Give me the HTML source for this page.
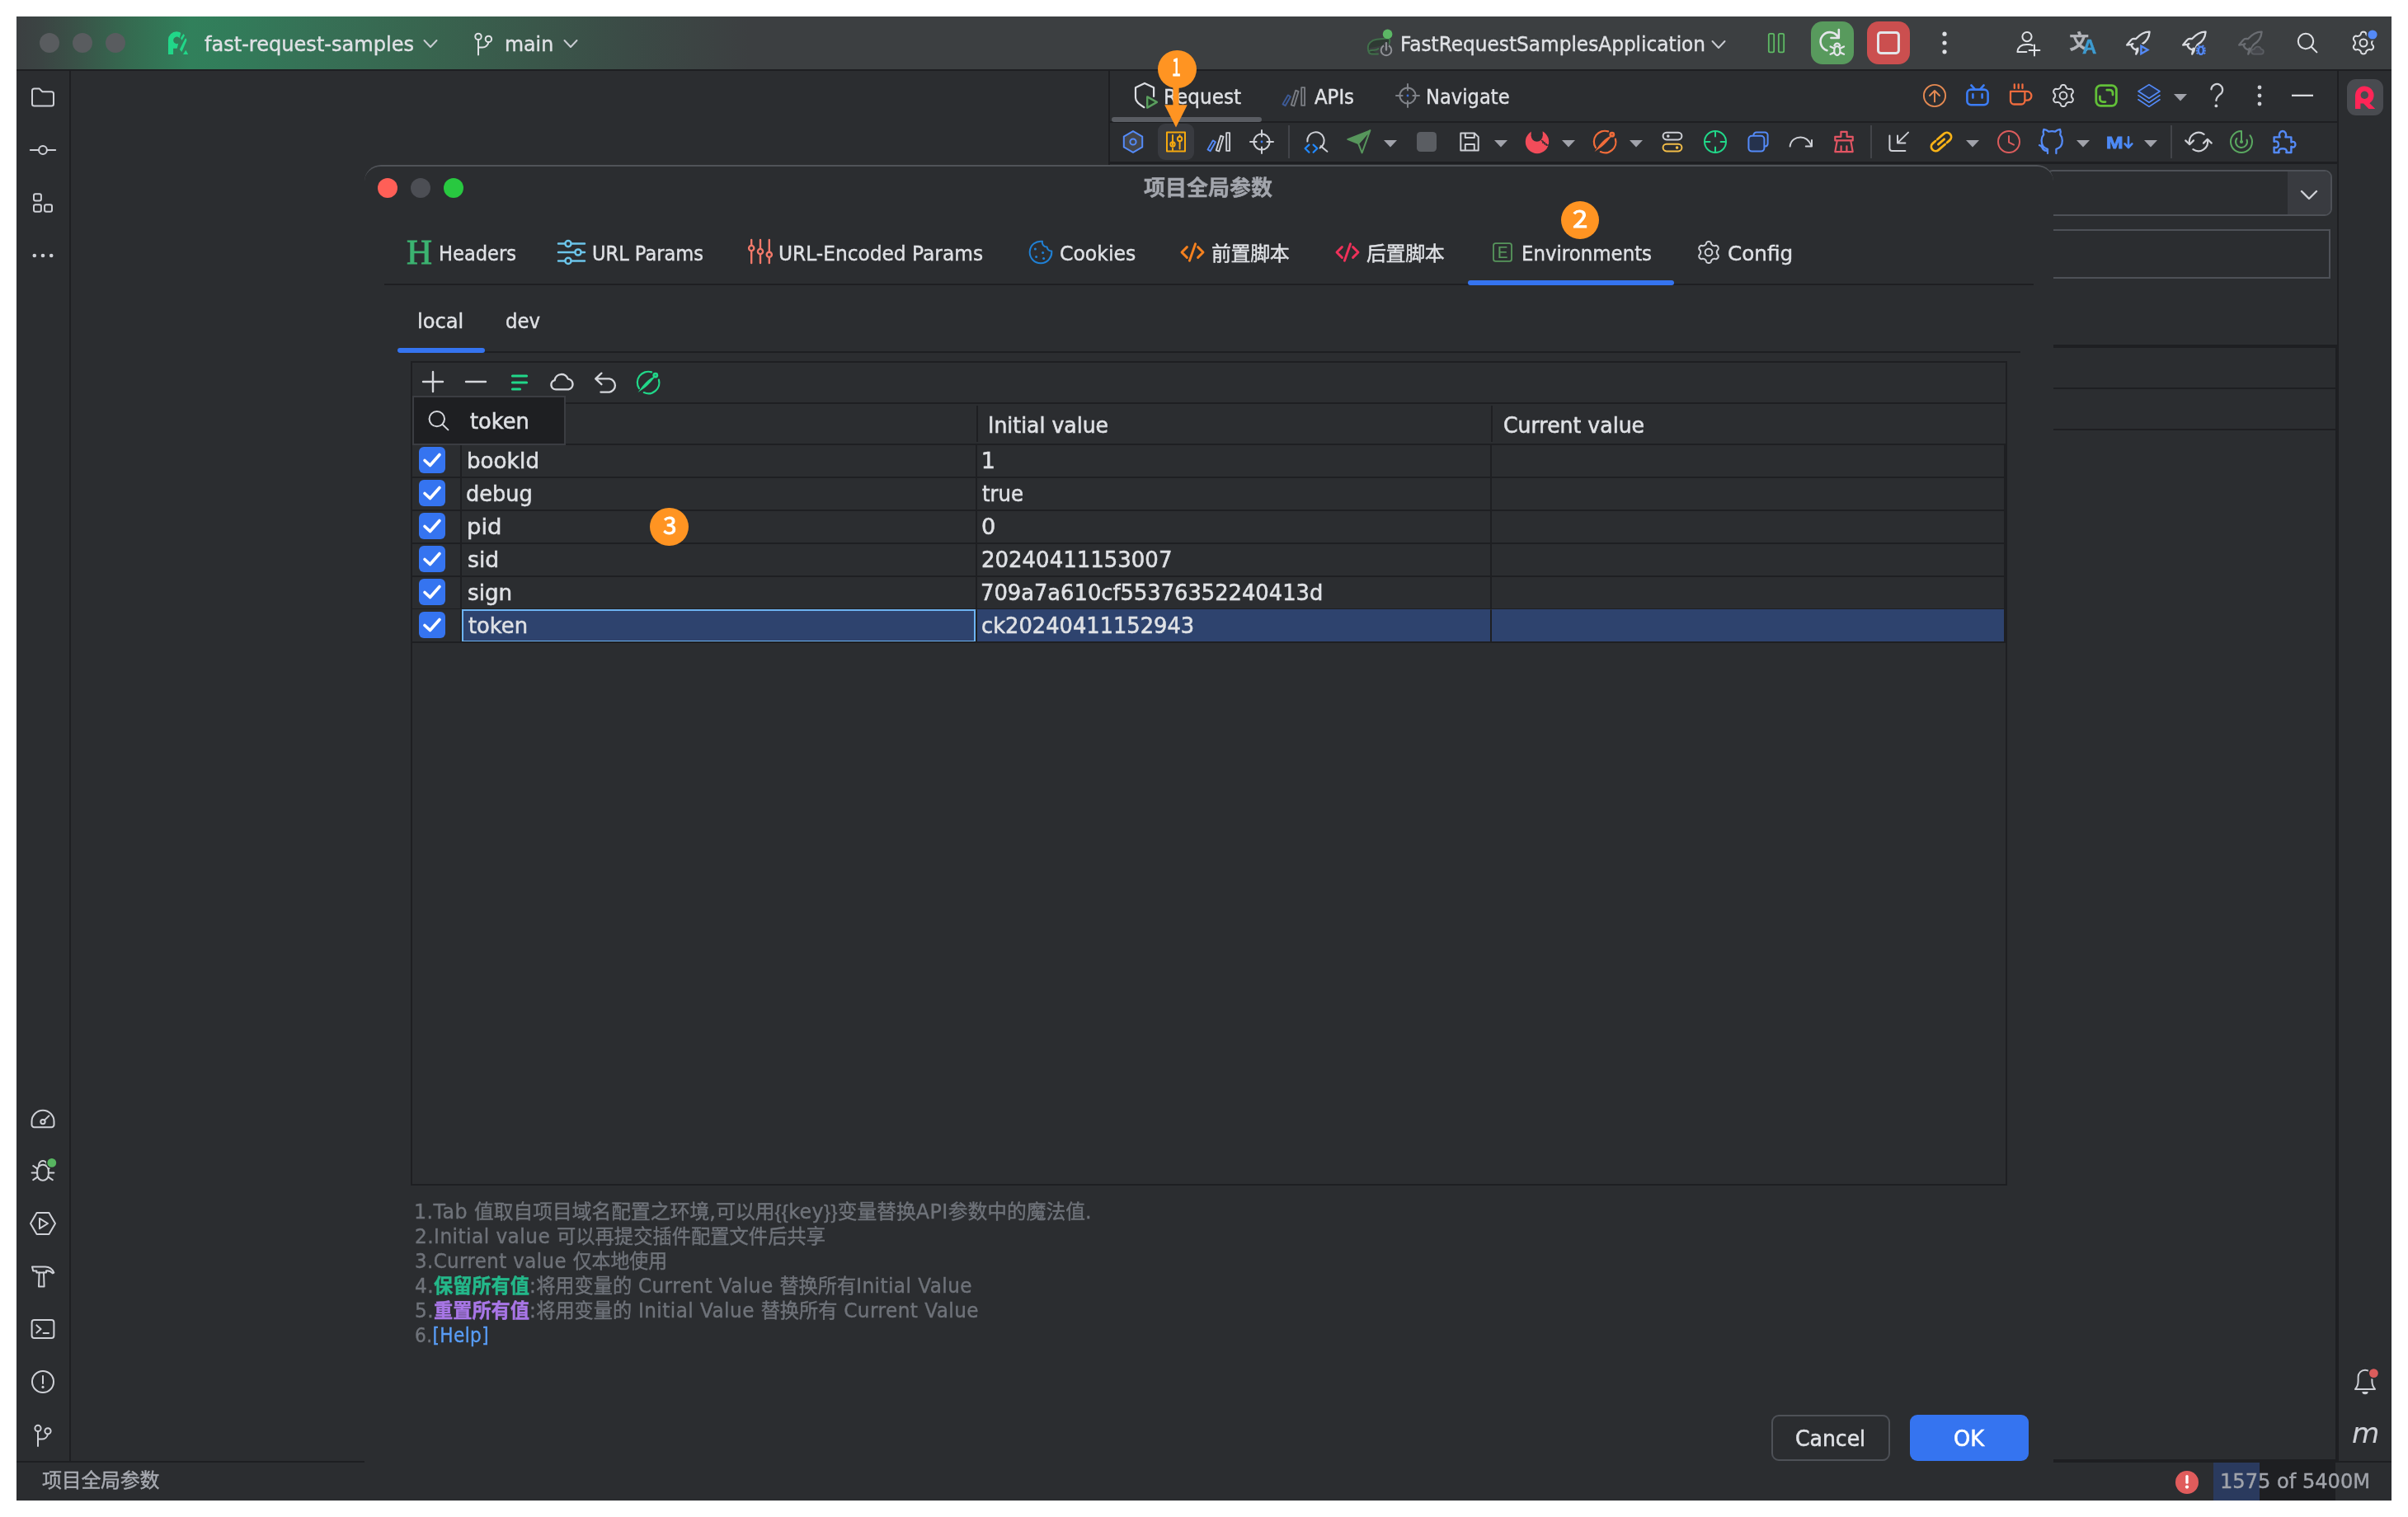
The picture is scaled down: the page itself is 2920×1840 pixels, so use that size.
<!DOCTYPE html><html><head><meta charset='utf-8'><title>IDE</title><style>html,body{margin:0;padding:0;background:#fff}body{width:2920px;height:1840px;position:relative;overflow:hidden}svg{overflow:visible}#w{position:absolute;left:0;top:0;width:2920px;height:1840px;will-change:transform}#w div{-webkit-text-stroke:0.4px}</style></head><body><div id='w'><div style="position:absolute;left:20px;top:20px;width:2880px;height:1800px;background:#2b2d30;"></div><div style="position:absolute;left:20px;top:20px;width:2880px;height:64px;background:linear-gradient(90deg,#3b3f41 0px,#3b4443 30px,#3a5047 67px,#356a50 135px,#31805b 211px,#327c5a 262px,#367156 359px,#38654f 493px,#3a574a 628px,#3b4b46 740px,#3c4443 820px,#3c3f41 890px);"></div><div style="position:absolute;left:20px;top:84px;width:2880px;height:2px;background:#1e1f22;"></div><div style="position:absolute;left:48px;top:40px;width:24px;height:24px;background:#595c5f;border-radius:50%"></div><div style="position:absolute;left:88px;top:40px;width:24px;height:24px;background:#595c5f;border-radius:50%"></div><div style="position:absolute;left:128px;top:40px;width:24px;height:24px;background:#595c5f;border-radius:50%"></div><svg style="position:absolute;left:196px;top:32px;" width="40" height="40" viewBox="-20 -20 40 40" fill="none"><defs><clipPath id="lgc"><path d="M-14 -16 H4.25 L-2.06 10 V16 H-14 Z"/></clipPath></defs><g clip-path="url(#lgc)"><path fill="#21d789" fill-rule="evenodd" d="M-12 13.9 V-3.5 A10.2 10.2 0 0 1 8.4 -3.5 A10.2 10.2 0 0 1 -1.8 6.7 H-5.9 V13.9 Z M-1.5 -7.4 a4.3 4.3 0 1 0 0.01 0 Z"/></g><path fill="#21d789" d="M6.4 -11 L8 -8.9 L4.5 -3.1 L3 -5.8 Z"/><path fill="#21d789" d="M9.9 -5.4 L10.4 -3 L4.4 10.9 L1.9 8 L8.4 -4.9 Z"/><path fill="#21d789" d="M9.3 8.8 L12.2 13.9 H6 Z"/></svg><svg style="position:absolute;left:502px;top:33px;" width="40" height="40" viewBox="-20 -20 40 40" fill="none"><g stroke="#c9ccd2" stroke-width="2" stroke-linecap="round" stroke-linejoin="round" fill="none" ><path d="M-7.5 -4.0 L0 4.0 L7.5 -4.0"/></g></svg><svg style="position:absolute;left:565.5px;top:32.5px;" width="40" height="40" viewBox="-20 -20 40 40" fill="none"><g stroke="#dfe1e5" stroke-width="2" stroke-linecap="round" stroke-linejoin="round" fill="none" ><circle cx="-6" cy="-8.6" r="3.7"/><circle cx="6.4" cy="-5.6" r="3.7"/><path d="M-6 -4.9 V13.5 M-6 4.5 H-1 A7.4 7.4 0 0 0 6.4 -1.9"/></g></svg><svg style="position:absolute;left:672px;top:33px;" width="40" height="40" viewBox="-20 -20 40 40" fill="none"><g stroke="#c9ccd2" stroke-width="2" stroke-linecap="round" stroke-linejoin="round" fill="none" ><path d="M-7.5 -4.0 L0 4.0 L7.5 -4.0"/></g></svg><svg style="position:absolute;left:1653px;top:32px;" width="40" height="40" viewBox="-20 -20 40 40" fill="none"><path d="M-14.2 6.5 C-14.6 1 -10 -3.4 -3.5 -4.2 L9 -5.6 C11.6 -5.9 12.6 -4 12.2 -1.6 L11 2 M-2 13.6 H-9.5 C-12.8 13.6 -14 10.5 -14.2 6.5 M-12 9.5 C-8 8 -4 9.6 -1.6 7" stroke="#41704b" stroke-width="2" fill="#2e3a33" stroke-linecap="round"/><circle cx="8" cy="8.9" r="6.3" stroke="#8f9196" stroke-width="2" fill="#3b3e41"/><path d="M8 0.2 V8.4" stroke="#8f9196" stroke-width="2.2" stroke-linecap="round"/><path d="M8 -0.5 V4" stroke="#3b3e41" stroke-width="6" /><path d="M8 0.2 V8.4" stroke="#8f9196" stroke-width="2.2" stroke-linecap="round"/><circle cx="9.6" cy="-10.6" r="5.8" fill="#5cb865"/></svg><svg style="position:absolute;left:2064px;top:34px;" width="40" height="40" viewBox="-20 -20 40 40" fill="none"><g stroke="#c9ccd2" stroke-width="2" stroke-linecap="round" stroke-linejoin="round" fill="none" ><path d="M-7.5 -4.0 L0 4.0 L7.5 -4.0"/></g></svg><svg style="position:absolute;left:2134px;top:32px;" width="40" height="40" viewBox="-20 -20 40 40" fill="none"><rect x="-9.2" y="-11.2" width="6.4" height="22.6" rx="1.6" stroke="#5fb865" stroke-width="1.8" fill="#344a3b"/><rect x="2.8" y="-11.2" width="6.4" height="22.6" rx="1.6" stroke="#5fb865" stroke-width="1.8" fill="#344a3b"/></svg><div style="position:absolute;left:2196px;top:26px;width:52px;height:52px;background:#589a5d;border-radius:14px"></div><svg style="position:absolute;left:2202px;top:32px;" width="40" height="40" viewBox="-20 -20 40 40" fill="none"><g stroke="#e4e6ea" stroke-width="2.6" stroke-linecap="round" stroke-linejoin="round" fill="none" stroke-linecap='butt' stroke-linejoin='miter'><path d="M-6.5 9.2 A11.3 11.3 0 1 1 6.2 -8 M7.8 -16 V-6 H-1.6"/></g><g stroke="#e4e6ea" stroke-width="2.3" stroke-linecap="round" fill="none"><path d="M2.3 6.8 L-2.4 4.4 M2.3 11.6 L-2.4 13.8 M9.3 6.8 L14 4.4 M9.3 11.6 L14 13.8"/><path d="M2.5 3.6 A3.4 4 0 0 1 9.1 3.6"/><ellipse cx="5.8" cy="9.6" rx="3.6" ry="5.4" fill="#589a5d"/></g></svg><div style="position:absolute;left:2264px;top:26px;width:52px;height:52px;background:#cb4f4f;border-radius:14px"></div><svg style="position:absolute;left:2270px;top:32px;" width="40" height="40" viewBox="-20 -20 40 40" fill="none"><rect x="-12.5" y="-12.6" width="24.9" height="25.1" rx="3.2" stroke="#e4e6ea" stroke-width="3"/></svg><svg style="position:absolute;left:2338px;top:32px;" width="40" height="40" viewBox="-20 -20 40 40" fill="none"><circle cy="-10.8" r="2.6" fill="#dfe1e5"/><circle r="2.6" fill="#dfe1e5"/><circle cy="10.8" r="2.6" fill="#dfe1e5"/></svg><svg style="position:absolute;left:2439px;top:32px;" width="40" height="40" viewBox="-20 -20 40 40" fill="none"><g stroke="#dfe1e5" stroke-width="2" stroke-linecap="round" stroke-linejoin="round" fill="none" ><circle cx="-1" cy="-7.4" r="5.6"/><path d="M-1.6 11 H-12.6 C-12 5 -8 2 -1.4 2 H1 C3 2 4.4 2.4 5.6 3"/><path d="M8 2.4 V15.4 M1.6 9 H14.4"/></g></svg><div style="position:absolute;left:2509.4px;top:32.9px;height:33px;line-height:33px;white-space:pre;font-family:'Noto Sans CJK SC',sans-serif;font-size:23.5px;font-weight:bold;font-style:normal;color:#b3b5ba;">文</div><div style="position:absolute;left:2525px;top:40.4px;height:34px;line-height:34px;white-space:pre;font-family:'Liberation Sans',sans-serif;font-size:24px;font-weight:bold;font-style:normal;color:#3d9bd0;">A</div><svg style="position:absolute;left:2573px;top:32px;" width="40" height="40" viewBox="-20 -20 40 40" fill="none"><g stroke="#d9dbe0" stroke-width="2.3" stroke-linecap="round" stroke-linejoin="round" fill="none" ><path d="M13.6 -13.3 C8 -13.6 2 -10.2 -3.1 -4.8 L-5.4 -5.1 C-7 -5 -8 -4.4 -8.8 -3.4 L-13.8 2.5 L-8.6 1.9 L-6.6 1.1 C-8.3 2.4 -8.5 3.2 -8.1 4 C-7.2 5.8 -5 7.8 -2.6 8.4 L-1.1 6.6 L-2.8 13.6 L3.9 1.9 C8.6 -0.6 13 -5.6 13.6 -13.3 Z"/></g><path d="M3.2 3.4 L11.9 8.5 L3.2 13.6 Z" fill="#3c3f41" stroke="#3c3f41" stroke-width="5.5" stroke-linejoin="round"/><path d="M3.4 3.8 L11.4 8.5 L3.4 13.2 Z" stroke="#548af7" stroke-width="2.4" stroke-linejoin="miter"/></svg><svg style="position:absolute;left:2641px;top:32px;" width="40" height="40" viewBox="-20 -20 40 40" fill="none"><g stroke="#d9dbe0" stroke-width="2.3" stroke-linecap="round" stroke-linejoin="round" fill="none" ><path d="M13.6 -13.3 C8 -13.6 2 -10.2 -3.1 -4.8 L-5.4 -5.1 C-7 -5 -8 -4.4 -8.8 -3.4 L-13.8 2.5 L-8.6 1.9 L-6.6 1.1 C-8.3 2.4 -8.5 3.2 -8.1 4 C-7.2 5.8 -5 7.8 -2.6 8.4 L-1.1 6.6 L-2.8 13.6 L3.9 1.9 C8.6 -0.6 13 -5.6 13.6 -13.3 Z"/></g><circle cx="7.9" cy="9.1" r="7.2" fill="#3c3f41"/><g stroke="#548af7" stroke-width="2" stroke-linecap="butt"><ellipse cx="7.9" cy="9.3" rx="3" ry="4.6" fill="#2b3a5c" stroke-width="2.3"/><path d="M5.9 4.6 L4.8 2.9 M9.9 4.6 L11 2.9 M4.4 6.8 L2.4 6.2 M4.1 9.6 H2 M4.4 12.2 L2.6 13.2 M11.4 6.8 L13.4 6.2 M11.7 9.6 H13.8 M11.4 12.2 L13.2 13.2"/></g></svg><svg style="position:absolute;left:2709px;top:32px;" width="40" height="40" viewBox="-20 -20 40 40" fill="none"><g stroke="#6a6d72" stroke-width="2.3" stroke-linecap="round" stroke-linejoin="round" fill="none" ><path d="M13.6 -13.3 C8 -13.6 2 -10.2 -3.1 -4.8 L-5.4 -5.1 C-7 -5 -8 -4.4 -8.8 -3.4 L-13.8 2.5 L-8.6 1.9 L-6.6 1.1 C-8.3 2.4 -8.5 3.2 -8.1 4 C-7.2 5.8 -5 7.8 -2.6 8.4 L-1.1 6.6 L-2.8 13.6 L3.9 1.9 C8.6 -0.6 13 -5.6 13.6 -13.3 Z"/></g><circle cx="8.6" cy="9.8" r="7.6" fill="#3c3f41"/><path d="M3.8 13.6 H12.8 A2.9 2.9 0 0 0 13 7.8 A4.4 4.4 0 0 0 4.6 7.6 A3 3 0 0 0 3.8 13.6 Z" stroke="#5a5d62" stroke-width="1.8" fill="#45474c"/></svg><svg style="position:absolute;left:2778px;top:32px;" width="40" height="40" viewBox="-20 -20 40 40" fill="none"><g stroke="#dfe1e5" stroke-width="2" stroke-linecap="round" stroke-linejoin="round" fill="none" ><circle cx="-2" cy="-2" r="9.2"/><path d="M5 5 L11.4 11.4"/></g></svg><svg style="position:absolute;left:2846px;top:32px;" width="40" height="40" viewBox="-20 -20 40 40" fill="none"><g stroke="#dfe1e5" stroke-width="2" stroke-linecap="round" stroke-linejoin="round" fill="none" ><path d="M0.00 -13.40 L0.58 -13.36 L1.16 -13.22 L1.71 -13.00 L2.23 -12.67 L2.71 -12.22 L3.03 -11.33 L3.29 -10.42 L3.62 -9.94 L3.96 -9.55 L4.30 -9.22 L4.66 -8.94 L5.02 -8.70 L5.42 -8.50 L5.84 -8.34 L6.30 -8.20 L6.80 -8.11 L7.38 -8.06 L8.29 -8.29 L9.23 -8.46 L9.86 -8.27 L10.40 -7.98 L10.87 -7.61 L11.27 -7.18 L11.60 -6.70 L11.86 -6.17 L12.03 -5.61 L12.11 -5.02 L12.09 -4.40 L11.94 -3.77 L11.33 -3.03 L10.67 -2.37 L10.42 -1.84 L10.25 -1.35 L10.14 -0.89 L10.07 -0.44 L10.05 0.00 L10.07 0.44 L10.14 0.89 L10.25 1.35 L10.42 1.84 L10.67 2.37 L11.33 3.03 L11.94 3.77 L12.09 4.40 L12.11 5.02 L12.03 5.61 L11.86 6.17 L11.60 6.70 L11.27 7.18 L10.87 7.61 L10.40 7.98 L9.86 8.27 L9.23 8.46 L8.29 8.29 L7.38 8.06 L6.80 8.11 L6.30 8.20 L5.84 8.34 L5.42 8.50 L5.03 8.70 L4.66 8.94 L4.30 9.22 L3.96 9.55 L3.62 9.94 L3.29 10.42 L3.03 11.33 L2.71 12.22 L2.23 12.67 L1.71 13.00 L1.16 13.22 L0.58 13.36 L0.00 13.40 L-0.58 13.36 L-1.16 13.22 L-1.71 13.00 L-2.23 12.67 L-2.71 12.22 L-3.03 11.33 L-3.29 10.42 L-3.62 9.94 L-3.96 9.55 L-4.30 9.22 L-4.66 8.94 L-5.03 8.70 L-5.42 8.50 L-5.84 8.34 L-6.30 8.20 L-6.80 8.11 L-7.38 8.06 L-8.29 8.29 L-9.23 8.46 L-9.86 8.27 L-10.40 7.98 L-10.87 7.61 L-11.27 7.18 L-11.60 6.70 L-11.86 6.17 L-12.03 5.61 L-12.11 5.02 L-12.09 4.40 L-11.94 3.77 L-11.33 3.03 L-10.67 2.37 L-10.42 1.84 L-10.25 1.35 L-10.14 0.89 L-10.07 0.44 L-10.05 0.00 L-10.07 -0.44 L-10.14 -0.89 L-10.25 -1.35 L-10.42 -1.84 L-10.67 -2.37 L-11.33 -3.03 L-11.94 -3.77 L-12.09 -4.40 L-12.11 -5.02 L-12.03 -5.61 L-11.86 -6.17 L-11.60 -6.70 L-11.27 -7.18 L-10.87 -7.61 L-10.40 -7.98 L-9.86 -8.27 L-9.23 -8.46 L-8.29 -8.29 L-7.38 -8.06 L-6.80 -8.11 L-6.30 -8.20 L-5.84 -8.34 L-5.42 -8.50 L-5.02 -8.70 L-4.66 -8.94 L-4.30 -9.22 L-3.96 -9.55 L-3.62 -9.94 L-3.29 -10.42 L-3.03 -11.33 L-2.71 -12.22 L-2.23 -12.67 L-1.71 -13.00 L-1.16 -13.22 L-0.58 -13.36 Z"/><circle r="4.49"/></g></svg><svg style="position:absolute;left:2856.5px;top:21.6px;" width="40" height="40" viewBox="-20 -20 40 40" fill="none"><circle r="7.4" fill="#3c3f41"/><circle r="5.6" fill="#548af7"/></svg><div style="position:absolute;left:248px;top:35.6px;height:35px;line-height:35px;white-space:pre;font-family:'DejaVu Sans','Liberation Sans','Noto Sans CJK SC',sans-serif;font-size:25px;font-weight:normal;font-style:normal;color:#dfe1e5;transform:scaleX(0.9623);transform-origin:0 50%;">fast-request-samples</div><div style="position:absolute;left:612.0px;top:35.6px;height:35px;line-height:35px;white-space:pre;font-family:'DejaVu Sans','Liberation Sans','Noto Sans CJK SC',sans-serif;font-size:25px;font-weight:normal;font-style:normal;color:#dfe1e5;transform:scaleX(0.9472);transform-origin:0 50%;">main</div><div style="position:absolute;left:1698.0px;top:35.6px;height:35px;line-height:35px;white-space:pre;font-family:'DejaVu Sans','Liberation Sans','Noto Sans CJK SC',sans-serif;font-size:25px;font-weight:normal;font-style:normal;color:#dfe1e5;transform:scaleX(0.9292);transform-origin:0 50%;">FastRequestSamplesApplication</div><div style="position:absolute;left:84px;top:86px;width:2px;height:1686px;background:#1e1f22;"></div><svg style="position:absolute;left:32px;top:98px;" width="40" height="40" viewBox="-20 -20 40 40" fill="none"><g stroke="#ced0d6" stroke-width="2" stroke-linecap="round" stroke-linejoin="round" fill="none" ><path d="M-13 -8 A2.6 2.6 0 0 1 -10.4 -10.6 H-4.4 L-0.6 -6.8 H10.4 A2.6 2.6 0 0 1 13 -4.2 V8 A2.6 2.6 0 0 1 10.4 10.6 H-10.4 A2.6 2.6 0 0 1 -13 8 Z"/></g></svg><svg style="position:absolute;left:31.8px;top:162px;" width="40" height="40" viewBox="-20 -20 40 40" fill="none"><g stroke="#ced0d6" stroke-width="2" stroke-linecap="round" stroke-linejoin="round" fill="none" ><circle r="4.9"/><path d="M-15.2 0 H-4.9 M4.9 0 H15.2"/></g></svg><svg style="position:absolute;left:32.1px;top:226px;" width="40" height="40" viewBox="-20 -20 40 40" fill="none"><g stroke="#ced0d6" stroke-width="2" stroke-linecap="round" stroke-linejoin="round" fill="none" ><rect x="-11" y="-10.8" width="8.9" height="8.3" rx="2"/><rect x="-11" y="2.3" width="8.9" height="8.4" rx="2"/><rect x="2.1" y="2.3" width="8.9" height="8.4" rx="2"/></g></svg><svg style="position:absolute;left:32px;top:290px;" width="40" height="40" viewBox="-20 -20 40 40" fill="none"><circle cx="-10.2" r="2.3" fill="#ced0d6"/><circle r="2.3" fill="#ced0d6"/><circle cx="10.2" r="2.3" fill="#ced0d6"/></svg><svg style="position:absolute;left:32px;top:1336.6px;" width="40" height="40" viewBox="-20 -20 40 40" fill="none"><g stroke="#ced0d6" stroke-width="2" stroke-linecap="round" stroke-linejoin="round" fill="none" ><path d="M-13.5 7.2 V3.3 A13.5 13.5 0 0 1 13.5 3.3 V7.2 A3 3 0 0 1 10.5 10.2 H-10.5 A3 3 0 0 1 -13.5 7.2 Z"/><circle cx="0" cy="3.6" r="2.7"/><path d="M2 1.6 L7.4 -3.6"/></g></svg><svg style="position:absolute;left:32px;top:1399.5px;" width="40" height="40" viewBox="-20 -20 40 40" fill="none"><g stroke="#ced0d6" stroke-width="2" stroke-linecap="round" stroke-linejoin="round" fill="none" ><path d="M-5 -6.4 A5 5.6 0 0 1 5 -6.4"/><path d="M-6.8 -0.4 A6.8 6.8 0 0 1 6.8 -0.4 V5 A6.8 6.8 0 0 1 -6.8 5 Z"/><path d="M-6.8 2.4 H-13.4 M6.8 2.4 H13.4 M-6.6 -2.4 L-11.8 -6 M6.6 -2.4 L11.8 -6 M-6.2 7.4 L-11.8 11.2 M6.2 7.4 L11.8 11.2"/></g><circle cx="10.8" cy="-9.6" r="7" fill="#2b2d30"/><circle cx="10.8" cy="-9.6" r="5.4" fill="#57b560"/></svg><svg style="position:absolute;left:32px;top:1464px;" width="40" height="40" viewBox="-20 -20 40 40" fill="none"><g stroke="#ced0d6" stroke-width="2" stroke-linecap="round" stroke-linejoin="round" fill="none" ><path d="M-7.4 -13 H7.4 L15 0 L7.4 13 H-7.4 L-15 0 Z"/><path d="M-4 -6.2 L6 0 L-4 6.2 Z"/></g></svg><svg style="position:absolute;left:32px;top:1528px;" width="40" height="40" viewBox="-20 -20 40 40" fill="none"><g stroke="#ced0d6" stroke-width="2" stroke-linecap="round" stroke-linejoin="round" fill="none" ><path d="M-13 -11.6 H3 C8 -11.6 11.6 -8.6 13.4 -4.4 L11.8 -3.6 C9.6 -6 7 -6.8 4 -6.6 V-4.6 H-7.6 V-6.6 H-11.8 Z"/><path d="M-4.4 -4.6 L-5 12.6 H1.6 L1 -4.6"/></g></svg><svg style="position:absolute;left:32px;top:1592px;" width="40" height="40" viewBox="-20 -20 40 40" fill="none"><g stroke="#ced0d6" stroke-width="2" stroke-linecap="round" stroke-linejoin="round" fill="none" ><rect x="-13.4" y="-11" width="26.8" height="22" rx="3"/><path d="M-7.6 -4.6 L-2.4 0 L-7.6 4.6 M0.6 5 H7"/></g></svg><svg style="position:absolute;left:32px;top:1655.5px;" width="40" height="40" viewBox="-20 -20 40 40" fill="none"><g stroke="#ced0d6" stroke-width="2" stroke-linecap="round" stroke-linejoin="round" fill="none" ><circle r="13"/><path d="M0 -7 V2"/></g><circle cy="6.4" r="1.6" fill="#ced0d6"/></svg><svg style="position:absolute;left:30.5px;top:1721px;" width="40" height="40" viewBox="-20 -20 40 40" fill="none"><g stroke="#ced0d6" stroke-width="2" stroke-linecap="round" stroke-linejoin="round" fill="none" ><circle cx="-5" cy="-8.6" r="3.6"/><circle cx="7" cy="-5.2" r="3.6"/><path d="M-5 -5 V13 M-5 4.6 H-0.4 A7.4 7.4 0 0 0 7 -1.6"/></g></svg><div style="position:absolute;left:20px;top:1772px;width:2880px;height:2px;background:#1e1f22;"></div><div style="position:absolute;left:51px;top:1779.3px;height:34px;line-height:34px;white-space:pre;font-family:'DejaVu Sans','Liberation Sans','Noto Sans CJK SC',sans-serif;font-size:24px;font-weight:normal;font-style:normal;color:#a8abb2;letter-spacing:-0.3px;">项目全局参数</div><div style="position:absolute;left:2684px;top:1774px;width:148px;height:46px;background:#1e1f22;"></div><div style="position:absolute;left:2684px;top:1774px;width:56px;height:46px;background:#2a3a5e;"></div><div style="position:absolute;left:2692px;top:1780.3px;height:34px;line-height:34px;white-space:pre;font-family:'DejaVu Sans','Liberation Sans','Noto Sans CJK SC',sans-serif;font-size:24px;font-weight:normal;font-style:normal;color:#a0a3aa;transform:scaleX(1.0046);transform-origin:0 50%;">1575 of 5400M</div><div style="position:absolute;left:2638px;top:1784px;width:28px;height:28px;background:#e05c5c;border-radius:50%"></div><svg style="position:absolute;left:2638px;top:1784px;" width="28" height="28" viewBox="0 0 28 28" fill="none"><path d="M14 6.6 V14.2" stroke="#fff" stroke-width="3.3" stroke-linecap="round"/><circle cx="14" cy="19.6" r="2.1" fill="#fff"/></svg><div style="position:absolute;left:2834px;top:86px;width:2px;height:1686px;background:#1e1f22;"></div><div style="position:absolute;left:2846px;top:96px;width:44px;height:44px;background:#494b50;border-radius:11px"></div><svg style="position:absolute;left:2848px;top:98px;" width="40" height="40" viewBox="-20 -20 40 40" fill="none"><path fill="#ff2557" fill-rule="evenodd" d="M-12 14 V-2.8 A11.3 11.3 0 1 1 5.4 7.2 L12.2 14 H4.4 L-2 7.6 H-5.6 V14 Z M-0.7 -7.4 a4.7 4.7 0 1 0 0.01 0 Z"/></svg><svg style="position:absolute;left:2848px;top:1656px;" width="40" height="40" viewBox="-20 -20 40 40" fill="none"><g stroke="#ced0d6" stroke-width="2" stroke-linecap="round" stroke-linejoin="round" fill="none" ><path d="M-12 9 H12 C9.6 6.4 8.4 3.6 8.4 -1 V-5.9 A8.4 8.4 0 0 0 -8.4 -5.9 V-1 C-8.4 3.6 -9.6 6.4 -12 9 Z"/></g><path d="M-3.6 12 H3.6 A3.6 3.2 0 0 1 -3.6 12 Z" fill="#ced0d6"/><circle cx="10.4" cy="-10.4" r="7.2" fill="#2b2d30"/><circle cx="10.4" cy="-10.4" r="5.4" fill="#db5c5c"/></svg><div style="position:absolute;left:2852px;top:1713.8px;height:48px;line-height:48px;white-space:pre;font-family:'DejaVu Sans',sans-serif;font-size:34px;font-weight:normal;font-style:italic;color:#ced0d6;transform:scaleX(1.0063);transform-origin:0 50%;-webkit-text-stroke:0.1px;">m</div><div style="position:absolute;left:1344px;top:86px;width:2px;height:114px;background:#1e1f22;"></div><div style="position:absolute;left:1346px;top:147px;width:1488px;height:2px;background:#1e1f22;"></div><div style="position:absolute;left:1346px;top:196px;width:1488px;height:3px;background:#1e1f22;"></div><div style="position:absolute;left:1348px;top:142px;width:182px;height:6px;background:#5a5d63;border-radius:3px"></div><div style="position:absolute;left:1411.0px;top:100.8px;height:34px;line-height:34px;white-space:pre;font-family:'DejaVu Sans','Liberation Sans','Noto Sans CJK SC',sans-serif;font-size:24.5px;font-weight:normal;font-style:normal;color:#dfe1e5;transform:scaleX(0.9449);transform-origin:0 50%;">Request</div><div style="position:absolute;left:1594px;top:100.8px;height:34px;line-height:34px;white-space:pre;font-family:'DejaVu Sans','Liberation Sans','Noto Sans CJK SC',sans-serif;font-size:24.5px;font-weight:normal;font-style:normal;color:#dfe1e5;transform:scaleX(0.9317);transform-origin:0 50%;">APIs</div><div style="position:absolute;left:1728.8px;top:100.8px;height:34px;line-height:34px;white-space:pre;font-family:'DejaVu Sans','Liberation Sans','Noto Sans CJK SC',sans-serif;font-size:24.5px;font-weight:normal;font-style:normal;color:#dfe1e5;transform:scaleX(0.9249);transform-origin:0 50%;">Navigate</div><div style="position:absolute;left:1404px;top:150px;width:44px;height:44px;background:#393b40;border-radius:9px"></div><div style="position:absolute;left:1562px;top:152px;width:2px;height:40px;background:#43454a;"></div><div style="position:absolute;left:2268px;top:152px;width:2px;height:40px;background:#43454a;"></div><div style="position:absolute;left:2632px;top:152px;width:2px;height:40px;background:#43454a;"></div><svg style="position:absolute;left:1370px;top:96px;" width="40" height="40" viewBox="-20 -20 40 40" fill="none"><g stroke="#dcdee3" stroke-width="2.2" stroke-linecap="round" stroke-linejoin="round" fill="none" stroke-linejoin='miter' stroke-linecap='butt'><path d="M9.1 0.9 V-9.8 L-2 -15.1 L-13 -9.8 V2.4 C-13 7.4 -8.6 10.6 -2.6 14.2"/></g><path d="M1.2 1.4 L12.9 7.9 L1.2 14.6 Z" fill="#213626" stroke="#5a9e5e" stroke-width="2.4" stroke-linejoin="round"/></svg><svg style="position:absolute;left:1549px;top:96.5px;" width="40" height="40" viewBox="-20 -20 40 40" fill="none"><g stroke="#7a7d83" stroke-width="1.9" stroke-linecap="round" stroke-linejoin="round" fill="none" stroke-linejoin='miter'><g transform="translate(-8.8 4.8) rotate(30)"><rect x="-1.8" y="-6.3" width="3.6" height="12.6" stroke="#3d5a96"/></g><g transform="translate(1.2 2.1) rotate(17)"><rect x="-1.8" y="-9.2" width="3.6" height="18.4" stroke="#7a7d83"/></g><rect x="9.2" y="-10.9" width="3.9" height="21.8" stroke="#7a7d83"/></g></svg><svg style="position:absolute;left:1686.5px;top:96px;" width="40" height="40" viewBox="-20 -20 40 40" fill="none"><g stroke="#7f8288" stroke-width="2" stroke-linecap="round" stroke-linejoin="round" fill="none" ><circle r="9.6"/><path d="M0 -14 V-6.4 M0 14 V6.4 M-14 0 H-6.4 M14 0 H6.4"/></g><circle r="1.4" fill="#3d6fd6"/></svg><svg style="position:absolute;left:2325.8px;top:96px;" width="40" height="40" viewBox="-20 -20 40 40" fill="none"><g stroke="#e58a52" stroke-width="1.9" stroke-linecap="round" stroke-linejoin="round" fill="none" ><circle r="13.1"/><path d="M0 7.4 V-5.6 M-6 0 L0 -6 L6 0"/></g></svg><svg style="position:absolute;left:2378px;top:95.2px;" width="40" height="40" viewBox="-20 -20 40 40" fill="none"><g stroke="#3c7df6" stroke-width="2.6" stroke-linecap="round" stroke-linejoin="round" fill="none" ><rect x="-12.6" y="-6.4" width="25.2" height="18.6" rx="4.6"/><path d="M-7.6 -11.6 L-3.4 -6.8 M7.6 -11.6 L3.4 -6.8 M-5.6 -0.6 V3.6 M5.6 -0.6 V3.6"/></g></svg><svg style="position:absolute;left:2430px;top:96px;" width="40" height="40" viewBox="-20 -20 40 40" fill="none"><g stroke="#f06c3e" stroke-width="2.3" stroke-linecap="round" stroke-linejoin="round" fill="none" ><path d="M-12 -5.1 H8 A5.4 5.4 0 0 1 8 5.7 H5.4 M5.4 -5.1 V6.2 A4.3 4.3 0 0 1 1.1 10.5 H-7.7 A4.3 4.3 0 0 1 -12 6.2 V-5.1"/></g><g stroke="#f06c3e" stroke-width="2.3" stroke-linecap="round" stroke-linejoin="round" fill="none" stroke-linecap='butt'><path d="M-7.2 -13.6 V-9 M-2.3 -13.6 V-9 M2.5 -13.6 V-9"/></g></svg><svg style="position:absolute;left:2482px;top:96px;" width="40" height="40" viewBox="-20 -20 40 40" fill="none"><g stroke="#d4d6db" stroke-width="2" stroke-linecap="round" stroke-linejoin="round" fill="none" ><path d="M0.00 -13.10 L0.57 -13.06 L1.13 -12.93 L1.67 -12.71 L2.18 -12.39 L2.65 -11.95 L2.97 -11.07 L3.21 -10.19 L3.54 -9.72 L3.87 -9.34 L4.20 -9.02 L4.55 -8.74 L4.91 -8.51 L5.30 -8.31 L5.71 -8.15 L6.15 -8.02 L6.65 -7.92 L7.22 -7.88 L8.11 -8.11 L9.03 -8.27 L9.64 -8.09 L10.17 -7.80 L10.63 -7.44 L11.02 -7.02 L11.34 -6.55 L11.59 -6.03 L11.76 -5.48 L11.84 -4.90 L11.82 -4.30 L11.67 -3.68 L11.07 -2.97 L10.43 -2.31 L10.19 -1.80 L10.02 -1.32 L9.91 -0.87 L9.85 -0.43 L9.83 0.00 L9.85 0.43 L9.91 0.87 L10.02 1.32 L10.19 1.80 L10.43 2.31 L11.07 2.97 L11.67 3.68 L11.82 4.30 L11.84 4.90 L11.76 5.48 L11.59 6.03 L11.34 6.55 L11.02 7.02 L10.63 7.44 L10.17 7.80 L9.64 8.09 L9.03 8.27 L8.11 8.11 L7.22 7.88 L6.65 7.92 L6.15 8.02 L5.71 8.15 L5.30 8.31 L4.91 8.51 L4.55 8.74 L4.20 9.02 L3.87 9.34 L3.54 9.72 L3.21 10.19 L2.97 11.07 L2.65 11.95 L2.18 12.39 L1.67 12.71 L1.13 12.93 L0.57 13.06 L0.00 13.10 L-0.57 13.06 L-1.13 12.93 L-1.67 12.71 L-2.18 12.39 L-2.65 11.95 L-2.97 11.07 L-3.21 10.19 L-3.54 9.72 L-3.87 9.34 L-4.20 9.02 L-4.55 8.74 L-4.91 8.51 L-5.30 8.31 L-5.71 8.15 L-6.15 8.02 L-6.65 7.92 L-7.22 7.88 L-8.11 8.11 L-9.03 8.27 L-9.64 8.09 L-10.17 7.80 L-10.63 7.44 L-11.02 7.02 L-11.34 6.55 L-11.59 6.03 L-11.76 5.48 L-11.84 4.90 L-11.82 4.30 L-11.67 3.68 L-11.07 2.97 L-10.43 2.31 L-10.19 1.80 L-10.02 1.32 L-9.91 0.87 L-9.85 0.43 L-9.83 0.00 L-9.85 -0.43 L-9.91 -0.87 L-10.02 -1.32 L-10.19 -1.80 L-10.43 -2.31 L-11.07 -2.97 L-11.67 -3.68 L-11.82 -4.30 L-11.84 -4.90 L-11.76 -5.48 L-11.59 -6.03 L-11.34 -6.55 L-11.02 -7.02 L-10.63 -7.44 L-10.17 -7.80 L-9.64 -8.09 L-9.03 -8.27 L-8.11 -8.11 L-7.22 -7.88 L-6.65 -7.92 L-6.15 -8.02 L-5.71 -8.15 L-5.30 -8.31 L-4.91 -8.51 L-4.55 -8.74 L-4.20 -9.02 L-3.87 -9.34 L-3.54 -9.72 L-3.21 -10.19 L-2.97 -11.07 L-2.65 -11.95 L-2.18 -12.39 L-1.67 -12.71 L-1.13 -12.93 L-0.57 -13.06 Z"/><circle r="4.39"/></g></svg><svg style="position:absolute;left:2534px;top:96px;" width="40" height="40" viewBox="-20 -20 40 40" fill="none"><g stroke="#62c038" stroke-width="2.8" stroke-linecap="round" stroke-linejoin="round" fill="none" ><rect x="-12.2" y="-12.4" width="24.6" height="24.8" rx="5.6"/><path d="M0.8 -6.8 H4.4 A3.6 3.6 0 0 1 8 -3.2 V-1 M-7.6 1 V4 A3.6 3.6 0 0 0 -4 7.6 H-1"/></g></svg><svg style="position:absolute;left:2586px;top:96px;" width="40" height="40" viewBox="-20 -20 40 40" fill="none"><path d="M0 -13.4 L13 -5.2 L0 3.2 L-13 -5.2 Z" fill="#25324d" stroke="#548af7" stroke-width="1.7" stroke-linejoin="round"/><g stroke="#548af7" stroke-width="1.7" stroke-linecap="round" stroke-linejoin="round" fill="none" ><path d="M-13 -0.4 L0 8.2 L13 -0.4 M-13 4.8 L0 13.4 L13 4.8"/></g></svg><svg style="position:absolute;left:2624px;top:98px;" width="40" height="40" viewBox="-20 -20 40 40" fill="none"><path d="M-8 -4 H8 L0 4.4 Z" fill="#a1a3ab"/></svg><svg style="position:absolute;left:2668px;top:96px;" width="40" height="40" viewBox="-20 -20 40 40" fill="none"><g stroke="#ced0d6" stroke-width="2.2" stroke-linecap="round" stroke-linejoin="round" fill="none" ><path d="M-6.6 -7.6 A6.9 6.9 0 1 1 3.4 -1 C0.6 1.6 -0.6 3 -0.6 6"/></g><circle cx="-0.6" cy="12.4" r="1.9" fill="#ced0d6"/></svg><svg style="position:absolute;left:2720px;top:96px;" width="40" height="40" viewBox="-20 -20 40 40" fill="none"><circle cy="-10" r="2.4" fill="#ced0d6"/><circle r="2.4" fill="#ced0d6"/><circle cy="10" r="2.4" fill="#ced0d6"/></svg><svg style="position:absolute;left:2772px;top:96px;" width="40" height="40" viewBox="-20 -20 40 40" fill="none"><path d="M-13 -0.2 H13" stroke="#dfe1e5" stroke-width="2.2"/></svg><svg style="position:absolute;left:1354px;top:152px;" width="40" height="40" viewBox="-20 -20 40 40" fill="none"><path d="M0 -12.9 L11.2 -6.45 V6.45 L0 12.9 L-11.2 6.45 V-6.45 Z" fill="#43454a" stroke="#548af7" stroke-width="2" stroke-linejoin="round"/><circle r="3.6" stroke="#548af7" stroke-width="2"/></svg><svg style="position:absolute;left:1406px;top:152px;" width="40" height="40" viewBox="-20 -20 40 40" fill="none"><g stroke="#f5a90f" stroke-width="2" stroke-linecap="round" stroke-linejoin="round" fill="none" stroke-linejoin='miter'><rect x="-11" y="-11.4" width="22" height="22.8"/><path d="M-4 -8 V4 M-4 10 V8 M4.6 -8 V-6.6 M4.6 -0.6 V8.6"/><circle cx="-4" cy="3" r="2.7"/><circle cx="4.6" cy="-3.6" r="2.7"/></g></svg><svg style="position:absolute;left:1458px;top:152px;" width="40" height="40" viewBox="-20 -20 40 40" fill="none"><g stroke="#ced0d6" stroke-width="1.9" stroke-linecap="round" stroke-linejoin="round" fill="none" stroke-linejoin='miter'><g transform="translate(-8.8 4.8) rotate(30)"><rect x="-1.8" y="-6.3" width="3.6" height="12.6" stroke="#548af7"/></g><g transform="translate(1.2 2.1) rotate(17)"><rect x="-1.8" y="-9.2" width="3.6" height="18.4" stroke="#ced0d6"/></g><rect x="9.2" y="-10.9" width="3.9" height="21.8" stroke="#ced0d6"/></g></svg><svg style="position:absolute;left:1510px;top:152px;" width="40" height="40" viewBox="-20 -20 40 40" fill="none"><g stroke="#ced0d6" stroke-width="2" stroke-linecap="round" stroke-linejoin="round" fill="none" ><circle r="9.6"/><path d="M0 -14 V-6.4 M0 14 V6.4 M-14 0 H-6.4 M14 0 H6.4"/></g><circle r="1.4" fill="#3d7bf5"/></svg><svg style="position:absolute;left:1576px;top:152px;" width="40" height="40" viewBox="-20 -20 40 40" fill="none"><g stroke="#ced0d6" stroke-width="2" stroke-linecap="round" stroke-linejoin="round" fill="none" ><path d="M-10.6 -0.4 A10.2 10.2 0 1 1 4.6 7.4 M5.6 5.2 L13.4 11.8"/></g><g stroke="#2189ff" stroke-width="2.2" stroke-linecap="round" stroke-linejoin="round" fill="none" ><path d="M-8.6 3.6 L-13.4 8 L-8.6 12.8 M-3.4 3.6 L1.4 8 L-3.4 12.8"/></g></svg><svg style="position:absolute;left:1628px;top:152px;" width="40" height="40" viewBox="-20 -20 40 40" fill="none"><path d="M13.4 -13.8 L-14 -3 L-0.8 2.2 Z" fill="#57965c" stroke="#57965c" stroke-width="1.6" stroke-linejoin="round"/><path d="M13.4 -13.8 L-0.8 2.2 L3.6 13.4 Z" stroke="#57965c" stroke-width="2" stroke-linejoin="round"/></svg><svg style="position:absolute;left:1666px;top:153.8px;" width="40" height="40" viewBox="-20 -20 40 40" fill="none"><path d="M-8 -4 H8 L0 4.4 Z" fill="#a1a3ab"/></svg><div style="position:absolute;left:1718px;top:160px;width:24px;height:24px;background:#5a5d62;border-radius:4.5px"></div><svg style="position:absolute;left:1762px;top:152px;" width="40" height="40" viewBox="-20 -20 40 40" fill="none"><g stroke="#ced0d6" stroke-width="2" stroke-linecap="round" stroke-linejoin="round" fill="none" stroke-linejoin='miter' stroke-linecap='butt'><path d="M-10.7 -10.5 H5.9 L10.7 -5.9 V10.5 H-10.7 Z M-5.2 -10.5 V-5 H5.8 V-10.5 M-5.2 10.5 V2.9 H5.8 V10.5"/></g></svg><svg style="position:absolute;left:1800px;top:153.8px;" width="40" height="40" viewBox="-20 -20 40 40" fill="none"><path d="M-8 -4 H8 L0 4.4 Z" fill="#a1a3ab"/></svg><svg style="position:absolute;left:1844.1px;top:151.8px;" width="40" height="40" viewBox="-20 -20 40 40" fill="none"><circle r="14.2" fill="#f24c5a"/><circle cx="-0.3" cy="-7.3" r="7" fill="#2b2d30"/><rect x="-7.3" y="-16" width="14" height="8.7" fill="#2b2d30"/><path d="M5 -1.6 L7.2 -0.6 L6.8 1 L9.2 1 L9 2.8 L11.2 2.6 L11.2 4.2 L14 3.8" stroke="#2b2d30" stroke-width="1.3" fill="none"/></svg><svg style="position:absolute;left:1882px;top:153.8px;" width="40" height="40" viewBox="-20 -20 40 40" fill="none"><path d="M-8 -4 H8 L0 4.4 Z" fill="#a1a3ab"/></svg><svg style="position:absolute;left:1926px;top:152px;" width="40" height="40" viewBox="-20 -20 40 40" fill="none"><g stroke="#f06c3a" stroke-width="2.2" stroke-linecap="round" stroke-linejoin="round" fill="none" ><path d="M4.1 -12.6 A13.2 13.2 0 0 0 -11 7.2 M-5.2 12.1 A13.2 13.2 0 0 0 12.9 -3.4"/></g><g fill="#f06c3a"><path d="M6.8 -7 C2.6 -5.6 -3.6 0.2 -6.8 4.2 L-12.4 12 L-4.4 6.6 C-0.4 3.4 5.6 -2.6 7.4 -6.2 Z"/><circle cx="8.8" cy="-8.8" r="3.4"/></g><path d="M7.8 -9 H9.8" stroke="#2b2d30" stroke-width="0.8"/></svg><svg style="position:absolute;left:1964px;top:153.8px;" width="40" height="40" viewBox="-20 -20 40 40" fill="none"><path d="M-8 -4 H8 L0 4.4 Z" fill="#a1a3ab"/></svg><svg style="position:absolute;left:2008px;top:152px;" width="40" height="40" viewBox="-20 -20 40 40" fill="none"><g stroke="#ced0d6" stroke-width="2" stroke-linecap="round" stroke-linejoin="round" fill="none" ><rect x="-11.4" y="-11.2" width="22.8" height="8.6" rx="4.3"/></g><circle cx="-5.2" cy="-6.9" r="1.8" fill="#ced0d6"/><g stroke="#f2bd48" stroke-width="2" stroke-linecap="round" stroke-linejoin="round" fill="none" ><rect x="-11.4" y="2.8" width="22.8" height="8.6" rx="4.3"/></g><circle cx="5.6" cy="7.1" r="1.8" fill="#f2bd48"/></svg><svg style="position:absolute;left:2060px;top:152px;" width="40" height="40" viewBox="-20 -20 40 40" fill="none"><g stroke="#21d789" stroke-width="2" stroke-linecap="round" stroke-linejoin="round" fill="none" ><circle r="13"/><path d="M0 -13 V-6.6 M0 13 V6.6 M-13 0 H-6.6 M13 0 H6.6"/></g></svg><svg style="position:absolute;left:2112px;top:152px;" width="40" height="40" viewBox="-20 -20 40 40" fill="none"><g stroke="#548af7" stroke-width="2" stroke-linecap="round" stroke-linejoin="round" fill="none" ><path d="M-5.6 -8 A3.6 3.6 0 0 1 -2 -11.6 H8 A3.6 3.6 0 0 1 11.6 -8 V2 A3.6 3.6 0 0 1 8.4 5.6"/></g><rect x="-11.6" y="-7.2" width="19" height="18.8" rx="4" fill="#25324d" stroke="#548af7" stroke-width="2"/></svg><svg style="position:absolute;left:2164px;top:152px;" width="40" height="40" viewBox="-20 -20 40 40" fill="none"><g stroke="#ced0d6" stroke-width="2" stroke-linecap="round" stroke-linejoin="round" fill="none" ><path d="M-13.4 5.6 C-12.4 -2.6 -6 -5.4 -0.6 -5.4 C5 -5.4 9.6 -1.6 12.4 4.4 M13 -2 V5.4 H5.8"/></g></svg><svg style="position:absolute;left:2216px;top:152px;" width="40" height="40" viewBox="-20 -20 40 40" fill="none"><g stroke="#e25563" stroke-width="2.2" stroke-linecap="round" stroke-linejoin="round" fill="none" stroke-linejoin='miter'><path d="M-3.6 -6.2 V-12.2 H3.6 V-6.2 H10.7 V-1.6 H-10.7 V-6.2 Z M-8.2 -1.6 L-10.7 12.1 H10.7 L8.2 -1.6 M-3.4 12.1 V5.4 M3.4 12.1 V5.4"/></g></svg><svg style="position:absolute;left:2281.5px;top:152px;" width="40" height="40" viewBox="-20 -20 40 40" fill="none"><g stroke="#ced0d6" stroke-width="2" stroke-linecap="round" stroke-linejoin="round" fill="none" ><path d="M-10.6 -7.6 V8 A3 3 0 0 0 -7.6 11 H8.4 M12 -11.4 L-1 1.4 M-1 -7.6 V1.4 H8.4"/></g></svg><svg style="position:absolute;left:2334px;top:152px;" width="40" height="40" viewBox="-20 -20 40 40" fill="none"><g stroke="#f9b317" stroke-width="2.8" stroke-linecap="round" stroke-linejoin="round" fill="none" ><g transform="rotate(-41)"><path d="M-1.6 -5.3 H9 A5.3 5.3 0 0 1 9 5.3 H4.6 M1.6 5.3 H-9 A5.3 5.3 0 0 1 -9 -5.3 H-4.6 M-4.8 0 H4.8"/></g></g></svg><svg style="position:absolute;left:2372px;top:153.8px;" width="40" height="40" viewBox="-20 -20 40 40" fill="none"><path d="M-8 -4 H8 L0 4.4 Z" fill="#a1a3ab"/></svg><svg style="position:absolute;left:2416px;top:152px;" width="40" height="40" viewBox="-20 -20 40 40" fill="none"><g stroke="#db5c5c" stroke-width="2" stroke-linecap="round" stroke-linejoin="round" fill="none" ><circle r="13"/><path d="M0 -7 V0.6 L6 3.6"/></g></svg><svg style="position:absolute;left:2468px;top:152px;" width="40" height="40" viewBox="-20 -20 40 40" fill="none"><g stroke="#548af7" stroke-width="2.3" stroke-linecap="round" stroke-linejoin="round" fill="none" ><path d="M-5 14 V8.8 C-9.6 7.6 -12.4 3.6 -12.4 -1.6 C-12.4 -4.6 -11.4 -7 -9.8 -8.8 C-10.6 -11 -10.4 -13.4 -9.6 -15.2 C-7.4 -15 -5.4 -14 -3.8 -12.4 C-1.4 -13 1.8 -13 4.2 -12.4 C5.8 -14 7.8 -15 10 -15.2 C10.8 -13.4 11 -11 10.2 -8.8 C11.8 -7 12.8 -4.6 12.8 -1.6 C12.8 3.6 10 7.6 5.4 8.8 V14 M-5 10.6 C-9 11.4 -10.6 9.4 -11.6 7 C-12.4 5.2 -13.6 4.4 -15 4.2"/></g></svg><svg style="position:absolute;left:2506px;top:153.8px;" width="40" height="40" viewBox="-20 -20 40 40" fill="none"><path d="M-8 -4 H8 L0 4.4 Z" fill="#a1a3ab"/></svg><div style="position:absolute;left:2554px;top:159.0px;height:28px;line-height:28px;white-space:pre;font-family:'Liberation Sans',sans-serif;font-size:20px;font-weight:bold;font-style:normal;color:#4d8af7;transform:scaleX(1.2348);transform-origin:0 50%;-webkit-text-stroke:0.8px;">M</div><svg style="position:absolute;left:2560.8px;top:152px;" width="40" height="40" viewBox="-20 -20 40 40" fill="none"><g stroke="#4d8af7" stroke-width="2.6" stroke-linecap="round" stroke-linejoin="round" fill="none" ><path d="M0 -5.8 V6.6 M-4.4 2.4 L0 7 L4.4 2.4"/></g></svg><svg style="position:absolute;left:2588px;top:153.8px;" width="40" height="40" viewBox="-20 -20 40 40" fill="none"><path d="M-8 -4 H8 L0 4.4 Z" fill="#a1a3ab"/></svg><svg style="position:absolute;left:2646px;top:152px;" width="40" height="40" viewBox="-20 -20 40 40" fill="none"><g stroke="#ced0d6" stroke-width="2.2" stroke-linecap="round" stroke-linejoin="round" fill="none" ><path d="M-10.8 2.4 A11.2 11.2 0 0 1 6.6 -9.2 M10.8 -2.4 A11.2 11.2 0 0 1 -6.6 9.2"/><path d="M-15.8 -1.6 L-10.8 3.2 L-6 -1.6 M15.8 1.6 L10.8 -3.2 L6 1.6"/></g></svg><svg style="position:absolute;left:2698px;top:152px;" width="40" height="40" viewBox="-20 -20 40 40" fill="none"><g stroke="#5aa860" stroke-width="2" stroke-linecap="round" stroke-linejoin="round" fill="none" ><path d="M0 0 V-13 A13 13 0 1 0 10.4 -7.8"/><path d="M-5.6 -4.2 A7 7 0 1 0 6.6 -2.4"/></g><circle r="2.1" fill="#5aa860"/></svg><svg style="position:absolute;left:2750.4px;top:151.5px;" width="40" height="40" viewBox="-20 -20 40 40" fill="none"><g stroke="#548af7" stroke-width="2.4" stroke-linecap="round" stroke-linejoin="round" fill="none" ><path d="M-12.4 -5.6 H-5.4 C-7.4 -9.4 -5 -13 -2 -13 C1 -13 3.4 -9.4 1.4 -5.6 H8.4 V0.6 C12 -1.4 13.4 1.2 13.4 3.2 C13.4 5.4 12 7.8 8.4 5.8 V13 H2.4 C3.6 9.6 1.6 8.2 -2 8.2 C-5.6 8.2 -7.6 9.6 -6.4 13 H-12.4 V6.6 C-8.6 8 -7 5.8 -7 3.2 C-7 0.6 -8.6 -1.6 -12.4 -0.2 Z"/></g></svg><div style="position:absolute;left:2480px;top:206px;width:348px;height:56px;background:#2b2d30;border:2px solid #4e5157;border-radius:9px;box-sizing:border-box"></div><div style="position:absolute;left:2774px;top:208px;width:52px;height:52px;background:#393b40;border-radius:0 7px 7px 0"></div><svg style="position:absolute;left:2789px;top:229.6px;" width="22" height="14" viewBox="0 0 22 14" fill="none"><path d="M2 2 L11 11 L20 2" stroke="#ced0d6" stroke-width="2.4" stroke-linecap="round" stroke-linejoin="round"/></svg><div style="position:absolute;left:2480px;top:278px;width:346px;height:60px;background:#2b2d30;border:2px solid #4e5157;box-sizing:border-box"></div><div style="position:absolute;left:2480px;top:418px;width:354px;height:4px;background:#1e1f22;"></div><div style="position:absolute;left:2490px;top:1770px;width:342px;height:4px;background:#1e1f22;"></div><div style="position:absolute;left:2480px;top:470px;width:352px;height:2px;background:#1e1f22;"></div><div style="position:absolute;left:2480px;top:520px;width:352px;height:2px;background:#1e1f22;"></div><div style="position:absolute;left:2832px;top:420px;width:2px;height:1352px;background:#1e1f22;"></div><div style="position:absolute;left:442px;top:200px;width:2048px;height:1620px;background:#2b2d30;border-radius:20px 20px 0 0;border-top:2px solid #505358;box-sizing:border-box"></div><div style="position:absolute;left:458px;top:216px;width:24px;height:24px;background:#ff5f57;border-radius:50%"></div><div style="position:absolute;left:498px;top:216px;width:24px;height:24px;background:#4c4e54;border-radius:50%"></div><div style="position:absolute;left:538px;top:216px;width:24px;height:24px;background:#28c840;border-radius:50%"></div><div style="position:absolute;left:1387px;top:210.3px;height:36px;line-height:36px;white-space:pre;font-family:'DejaVu Sans','Liberation Sans','Noto Sans CJK SC',sans-serif;font-size:26px;font-weight:bold;font-style:normal;color:#a3a6ad;">项目全局参数</div><div style="position:absolute;left:466px;top:344px;width:2000px;height:2px;background:#1e1f22;"></div><div style="position:absolute;left:532px;top:290.8px;height:34px;line-height:34px;white-space:pre;font-family:'DejaVu Sans','Liberation Sans','Noto Sans CJK SC',sans-serif;font-size:24.5px;font-weight:normal;font-style:normal;color:#dfe1e5;transform:scaleX(0.9227);transform-origin:0 50%;">Headers</div><div style="position:absolute;left:718px;top:290.8px;height:34px;line-height:34px;white-space:pre;font-family:'DejaVu Sans','Liberation Sans','Noto Sans CJK SC',sans-serif;font-size:24.5px;font-weight:normal;font-style:normal;color:#dfe1e5;transform:scaleX(0.9198);transform-origin:0 50%;">URL Params</div><div style="position:absolute;left:944.0px;top:290.8px;height:34px;line-height:34px;white-space:pre;font-family:'DejaVu Sans','Liberation Sans','Noto Sans CJK SC',sans-serif;font-size:24.5px;font-weight:normal;font-style:normal;color:#dfe1e5;transform:scaleX(0.9508);transform-origin:0 50%;">URL-Encoded Params</div><div style="position:absolute;left:1285.0px;top:290.8px;height:34px;line-height:34px;white-space:pre;font-family:'DejaVu Sans','Liberation Sans','Noto Sans CJK SC',sans-serif;font-size:24.5px;font-weight:normal;font-style:normal;color:#dfe1e5;transform:scaleX(0.9615);transform-origin:0 50%;">Cookies</div><div style="position:absolute;left:1845px;top:290.8px;height:34px;line-height:34px;white-space:pre;font-family:'DejaVu Sans','Liberation Sans','Noto Sans CJK SC',sans-serif;font-size:24.5px;font-weight:normal;font-style:normal;color:#dfe1e5;transform:scaleX(0.9340);transform-origin:0 50%;">Environments</div><div style="position:absolute;left:2095px;top:290.8px;height:34px;line-height:34px;white-space:pre;font-family:'DejaVu Sans','Liberation Sans','Noto Sans CJK SC',sans-serif;font-size:24.5px;font-weight:normal;font-style:normal;color:#dfe1e5;transform:scaleX(1.0065);transform-origin:0 50%;">Config</div><div style="position:absolute;left:1469px;top:290.8px;height:34px;line-height:34px;white-space:pre;font-family:'DejaVu Sans','Liberation Sans','Noto Sans CJK SC',sans-serif;font-size:24px;font-weight:normal;font-style:normal;color:#dfe1e5;letter-spacing:-0.4px;">前置脚本</div><div style="position:absolute;left:1657px;top:290.8px;height:34px;line-height:34px;white-space:pre;font-family:'DejaVu Sans','Liberation Sans','Noto Sans CJK SC',sans-serif;font-size:24px;font-weight:normal;font-style:normal;color:#dfe1e5;letter-spacing:-0.4px;">后置脚本</div><div style="position:absolute;left:1780px;top:340px;width:250px;height:6px;background:#3574f0;border-radius:3px"></div><div style="position:absolute;left:493px;top:277.1px;height:59px;line-height:59px;white-space:pre;font-family:'Liberation Serif','DejaVu Serif',serif;font-size:42px;font-weight:normal;font-style:normal;color:#3cb371;transform:scaleX(1.0228);transform-origin:0 50%;-webkit-text-stroke:0.9px;">H</div><svg style="position:absolute;left:672.6px;top:285.8px;" width="40" height="40" viewBox="-20 -20 40 40" fill="none"><g stroke="#6cc5ea" stroke-width="2.5" stroke-linecap="round" stroke-linejoin="round" fill="none" ><path d="M-16 -10.4 H-8 M0 -10.4 H16 M-16 0 H4 M12 0 H16 M-16 10.4 H-8 M0 10.4 H16"/><circle cx="-4" cy="-10.4" r="3.6"/><circle cx="8" cy="0" r="3.6"/><circle cx="-4" cy="10.4" r="3.6"/></g></svg><svg style="position:absolute;left:902px;top:285px;" width="40" height="40" viewBox="-20 -20 40 40" fill="none"><g stroke="#f2796a" stroke-width="2.4" stroke-linecap="round" stroke-linejoin="round" fill="none" ><path d="M-10.8 -14 V-7.6 M-10.8 -0.6 V14 M0 -14 V-3.4 M0 3.4 V14 M10.8 -14 V0.4 M10.8 7 V14"/><circle cx="-10.8" cy="-4" r="3.1"/><circle cx="0" cy="0" r="3.1"/><circle cx="10.8" cy="3.8" r="3.1"/></g></svg><svg style="position:absolute;left:1242px;top:285.7px;" width="40" height="40" viewBox="-20 -20 40 40" fill="none"><g stroke="#2080d4" stroke-width="2" stroke-linecap="round" stroke-linejoin="round" fill="none" ><path d="M2 -13.2 A13.3 13.3 0 1 0 13.2 -1.6 A5.2 5.2 0 0 1 7.6 -6.4 A5.6 5.6 0 0 1 2 -13.2 Z"/></g><g fill="#2080d4"><circle cx="-6.6" cy="-4" r="1.5"/><circle cx="2.6" cy="0.6" r="1.5"/><circle cx="-5.4" cy="5.6" r="1.5"/><circle cx="3.6" cy="7.6" r="1.5"/></g></svg><svg style="position:absolute;left:1426px;top:285.5px;" width="40" height="40" viewBox="-20 -20 40 40" fill="none"><g stroke="#f5811f" stroke-width="2.9" stroke-linecap="round" stroke-linejoin="round" fill="none" stroke-linejoin='miter'><path d="M-6.6 -6.4 L-13 0 L-6.6 6.4 M6.6 -6.4 L13 0 L6.6 6.4 M3.6 -10.2 L-3.6 10.2"/></g></svg><svg style="position:absolute;left:1614px;top:285.5px;" width="40" height="40" viewBox="-20 -20 40 40" fill="none"><g stroke="#f0315a" stroke-width="2.9" stroke-linecap="round" stroke-linejoin="round" fill="none" stroke-linejoin='miter'><path d="M-6.6 -6.4 L-13 0 L-6.6 6.4 M6.6 -6.4 L13 0 L6.6 6.4 M3.6 -10.2 L-3.6 10.2"/></g></svg><svg style="position:absolute;left:1802px;top:286.3px;" width="40" height="40" viewBox="-20 -20 40 40" fill="none"><g stroke="#57965c" stroke-width="1.8" stroke-linecap="round" stroke-linejoin="round" fill="none" stroke-linejoin='miter' stroke-linecap='butt'><rect x="-11" y="-10.8" width="22" height="21.6" rx="2.6"/></g></svg><div style="position:absolute;left:1816.2px;top:293.1px;height:27px;line-height:27px;white-space:pre;font-family:'Liberation Sans',sans-serif;font-size:19.5px;font-weight:normal;font-style:normal;color:#57965c;transform:scaleX(0.9502);transform-origin:0 50%;-webkit-text-stroke:0.2px;">E</div><svg style="position:absolute;left:2052px;top:286px;" width="40" height="40" viewBox="-20 -20 40 40" fill="none"><g stroke="#ced0d6" stroke-width="2" stroke-linecap="round" stroke-linejoin="round" fill="none" ><path d="M0.00 -13.00 L0.57 -12.96 L1.12 -12.83 L1.66 -12.61 L2.17 -12.30 L2.63 -11.86 L2.94 -10.99 L3.19 -10.11 L3.51 -9.65 L3.84 -9.27 L4.17 -8.95 L4.52 -8.68 L4.87 -8.44 L5.26 -8.25 L5.66 -8.09 L6.11 -7.96 L6.60 -7.86 L7.16 -7.82 L8.04 -8.04 L8.96 -8.21 L9.56 -8.03 L10.09 -7.74 L10.55 -7.39 L10.94 -6.97 L11.26 -6.50 L11.50 -5.99 L11.67 -5.44 L11.75 -4.87 L11.73 -4.27 L11.59 -3.65 L10.99 -2.94 L10.35 -2.29 L10.11 -1.78 L9.95 -1.31 L9.84 -0.86 L9.77 -0.43 L9.75 0.00 L9.77 0.43 L9.84 0.86 L9.95 1.31 L10.11 1.78 L10.35 2.29 L10.99 2.94 L11.59 3.65 L11.73 4.27 L11.75 4.87 L11.67 5.44 L11.50 5.99 L11.26 6.50 L10.94 6.97 L10.55 7.39 L10.09 7.74 L9.56 8.03 L8.96 8.21 L8.04 8.04 L7.16 7.82 L6.60 7.86 L6.11 7.96 L5.66 8.09 L5.26 8.25 L4.88 8.44 L4.52 8.68 L4.17 8.95 L3.84 9.27 L3.51 9.65 L3.19 10.11 L2.94 10.99 L2.63 11.86 L2.17 12.30 L1.66 12.61 L1.12 12.83 L0.57 12.96 L0.00 13.00 L-0.57 12.96 L-1.12 12.83 L-1.66 12.61 L-2.17 12.30 L-2.63 11.86 L-2.94 10.99 L-3.19 10.11 L-3.51 9.65 L-3.84 9.27 L-4.17 8.95 L-4.52 8.68 L-4.88 8.44 L-5.26 8.25 L-5.66 8.09 L-6.11 7.96 L-6.60 7.86 L-7.16 7.82 L-8.04 8.04 L-8.96 8.21 L-9.56 8.03 L-10.09 7.74 L-10.55 7.39 L-10.94 6.97 L-11.26 6.50 L-11.50 5.99 L-11.67 5.44 L-11.75 4.87 L-11.73 4.27 L-11.59 3.65 L-10.99 2.94 L-10.35 2.29 L-10.11 1.78 L-9.95 1.31 L-9.84 0.86 L-9.77 0.43 L-9.75 0.00 L-9.77 -0.43 L-9.84 -0.86 L-9.95 -1.31 L-10.11 -1.78 L-10.35 -2.29 L-10.99 -2.94 L-11.59 -3.65 L-11.73 -4.27 L-11.75 -4.87 L-11.67 -5.44 L-11.50 -5.99 L-11.26 -6.50 L-10.94 -6.97 L-10.55 -7.39 L-10.09 -7.74 L-9.56 -8.03 L-8.96 -8.21 L-8.04 -8.04 L-7.16 -7.82 L-6.60 -7.86 L-6.11 -7.96 L-5.66 -8.09 L-5.26 -8.25 L-4.87 -8.44 L-4.52 -8.68 L-4.17 -8.95 L-3.84 -9.27 L-3.51 -9.65 L-3.19 -10.11 L-2.94 -10.99 L-2.63 -11.86 L-2.17 -12.30 L-1.66 -12.61 L-1.12 -12.83 L-0.57 -12.96 Z"/><circle r="4.36"/></g></svg><div style="position:absolute;left:482px;top:426px;width:1968px;height:2px;background:#1e1f22;"></div><div style="position:absolute;left:482px;top:422px;width:106px;height:6px;background:#3574f0;border-radius:3px"></div><div style="position:absolute;left:506.0px;top:372.8px;height:34px;line-height:34px;white-space:pre;font-family:'DejaVu Sans','Liberation Sans','Noto Sans CJK SC',sans-serif;font-size:24.5px;font-weight:normal;font-style:normal;color:#dfe1e5;transform:scaleX(0.9853);transform-origin:0 50%;">local</div><div style="position:absolute;left:613.0px;top:372.8px;height:34px;line-height:34px;white-space:pre;font-family:'DejaVu Sans','Liberation Sans','Noto Sans CJK SC',sans-serif;font-size:24.5px;font-weight:normal;font-style:normal;color:#dfe1e5;transform:scaleX(0.9322);transform-origin:0 50%;">dev</div><div style="position:absolute;left:498px;top:438px;width:1936px;height:1000px;background:#2b2d30;border:2px solid #1e1f22;box-sizing:border-box"></div><div style="position:absolute;left:500px;top:488px;width:1932px;height:2px;background:#1e1f22;"></div><div style="position:absolute;left:500px;top:538px;width:1932px;height:2px;background:#1e1f22;"></div><div style="position:absolute;left:1184px;top:492px;width:2px;height:44px;background:#1e1f22;"></div><div style="position:absolute;left:1808px;top:492px;width:2px;height:44px;background:#1e1f22;"></div><div style="position:absolute;left:1198.0px;top:496.8px;height:37px;line-height:37px;white-space:pre;font-family:'DejaVu Sans','Liberation Sans','Noto Sans CJK SC',sans-serif;font-size:26.5px;font-weight:normal;font-style:normal;color:#dfe1e5;transform:scaleX(0.9476);transform-origin:0 50%;-webkit-text-stroke:.55px;">Initial value</div><div style="position:absolute;left:1823.0px;top:496.8px;height:37px;line-height:37px;white-space:pre;font-family:'DejaVu Sans','Liberation Sans','Noto Sans CJK SC',sans-serif;font-size:26.5px;font-weight:normal;font-style:normal;color:#dfe1e5;transform:scaleX(0.9483);transform-origin:0 50%;-webkit-text-stroke:.55px;">Current value</div><div style="position:absolute;left:500px;top:578px;width:1932px;height:2px;background:#1e1f22;"></div><div style="position:absolute;left:558px;top:540px;width:2px;height:38px;background:#1e1f22;"></div><div style="position:absolute;left:1183px;top:540px;width:2px;height:38px;background:#1e1f22;"></div><div style="position:absolute;left:1807px;top:540px;width:2px;height:38px;background:#1e1f22;"></div><div style="position:absolute;left:508px;top:542px;width:32px;height:32px;background:#3574f0;border-radius:6px"></div><svg style="position:absolute;left:508px;top:542px;" width="32" height="32" viewBox="0 0 32 32" fill="none"><path d="M7 16.5 L13.5 22.5 L25 9.5" stroke="#fff" stroke-width="3.6" stroke-linecap="round" stroke-linejoin="round"/></svg><div style="position:absolute;left:566.2px;top:539.6px;height:38px;line-height:38px;white-space:pre;font-family:'DejaVu Sans','Liberation Sans','Noto Sans CJK SC',sans-serif;font-size:27px;font-weight:normal;font-style:normal;color:#dfe1e5;transform:scaleX(0.9678);transform-origin:0 50%;-webkit-text-stroke:.55px;">bookId</div><div style="position:absolute;left:1189.8px;top:539.6px;height:38px;line-height:38px;white-space:pre;font-family:'DejaVu Sans','Liberation Sans','Noto Sans CJK SC',sans-serif;font-size:27px;font-weight:normal;font-style:normal;color:#dfe1e5;-webkit-text-stroke:.55px;">1</div><div style="position:absolute;left:500px;top:618px;width:1932px;height:2px;background:#1e1f22;"></div><div style="position:absolute;left:558px;top:580px;width:2px;height:38px;background:#1e1f22;"></div><div style="position:absolute;left:1183px;top:580px;width:2px;height:38px;background:#1e1f22;"></div><div style="position:absolute;left:1807px;top:580px;width:2px;height:38px;background:#1e1f22;"></div><div style="position:absolute;left:508px;top:582px;width:32px;height:32px;background:#3574f0;border-radius:6px"></div><svg style="position:absolute;left:508px;top:582px;" width="32" height="32" viewBox="0 0 32 32" fill="none"><path d="M7 16.5 L13.5 22.5 L25 9.5" stroke="#fff" stroke-width="3.6" stroke-linecap="round" stroke-linejoin="round"/></svg><div style="position:absolute;left:565.4px;top:579.6px;height:38px;line-height:38px;white-space:pre;font-family:'DejaVu Sans','Liberation Sans','Noto Sans CJK SC',sans-serif;font-size:27px;font-weight:normal;font-style:normal;color:#dfe1e5;transform:scaleX(0.9479);transform-origin:0 50%;-webkit-text-stroke:.55px;">debug</div><div style="position:absolute;left:1190.8px;top:579.6px;height:38px;line-height:38px;white-space:pre;font-family:'DejaVu Sans','Liberation Sans','Noto Sans CJK SC',sans-serif;font-size:27px;font-weight:normal;font-style:normal;color:#dfe1e5;transform:scaleX(0.9025);transform-origin:0 50%;-webkit-text-stroke:.55px;">true</div><div style="position:absolute;left:500px;top:658px;width:1932px;height:2px;background:#1e1f22;"></div><div style="position:absolute;left:558px;top:620px;width:2px;height:38px;background:#1e1f22;"></div><div style="position:absolute;left:1183px;top:620px;width:2px;height:38px;background:#1e1f22;"></div><div style="position:absolute;left:1807px;top:620px;width:2px;height:38px;background:#1e1f22;"></div><div style="position:absolute;left:508px;top:622px;width:32px;height:32px;background:#3574f0;border-radius:6px"></div><svg style="position:absolute;left:508px;top:622px;" width="32" height="32" viewBox="0 0 32 32" fill="none"><path d="M7 16.5 L13.5 22.5 L25 9.5" stroke="#fff" stroke-width="3.6" stroke-linecap="round" stroke-linejoin="round"/></svg><div style="position:absolute;left:566.2px;top:619.6px;height:38px;line-height:38px;white-space:pre;font-family:'DejaVu Sans','Liberation Sans','Noto Sans CJK SC',sans-serif;font-size:27px;font-weight:normal;font-style:normal;color:#dfe1e5;transform:scaleX(1.0190);transform-origin:0 50%;-webkit-text-stroke:.55px;">pid</div><div style="position:absolute;left:1189.8px;top:619.6px;height:38px;line-height:38px;white-space:pre;font-family:'DejaVu Sans','Liberation Sans','Noto Sans CJK SC',sans-serif;font-size:27px;font-weight:normal;font-style:normal;color:#dfe1e5;transform:scaleX(1.0070);transform-origin:0 50%;-webkit-text-stroke:.55px;">0</div><div style="position:absolute;left:500px;top:698px;width:1932px;height:2px;background:#1e1f22;"></div><div style="position:absolute;left:558px;top:660px;width:2px;height:38px;background:#1e1f22;"></div><div style="position:absolute;left:1183px;top:660px;width:2px;height:38px;background:#1e1f22;"></div><div style="position:absolute;left:1807px;top:660px;width:2px;height:38px;background:#1e1f22;"></div><div style="position:absolute;left:508px;top:662px;width:32px;height:32px;background:#3574f0;border-radius:6px"></div><svg style="position:absolute;left:508px;top:662px;" width="32" height="32" viewBox="0 0 32 32" fill="none"><path d="M7 16.5 L13.5 22.5 L25 9.5" stroke="#fff" stroke-width="3.6" stroke-linecap="round" stroke-linejoin="round"/></svg><div style="position:absolute;left:567.2px;top:659.6px;height:38px;line-height:38px;white-space:pre;font-family:'DejaVu Sans','Liberation Sans','Noto Sans CJK SC',sans-serif;font-size:27px;font-weight:normal;font-style:normal;color:#dfe1e5;transform:scaleX(0.9887);transform-origin:0 50%;-webkit-text-stroke:.55px;">sid</div><div style="position:absolute;left:1189.8px;top:659.6px;height:38px;line-height:38px;white-space:pre;font-family:'DejaVu Sans','Liberation Sans','Noto Sans CJK SC',sans-serif;font-size:27px;font-weight:normal;font-style:normal;color:#dfe1e5;transform:scaleX(0.9623);transform-origin:0 50%;-webkit-text-stroke:.55px;">20240411153007</div><div style="position:absolute;left:500px;top:738px;width:1932px;height:2px;background:#1e1f22;"></div><div style="position:absolute;left:558px;top:700px;width:2px;height:38px;background:#1e1f22;"></div><div style="position:absolute;left:1183px;top:700px;width:2px;height:38px;background:#1e1f22;"></div><div style="position:absolute;left:1807px;top:700px;width:2px;height:38px;background:#1e1f22;"></div><div style="position:absolute;left:508px;top:702px;width:32px;height:32px;background:#3574f0;border-radius:6px"></div><svg style="position:absolute;left:508px;top:702px;" width="32" height="32" viewBox="0 0 32 32" fill="none"><path d="M7 16.5 L13.5 22.5 L25 9.5" stroke="#fff" stroke-width="3.6" stroke-linecap="round" stroke-linejoin="round"/></svg><div style="position:absolute;left:567.2px;top:699.6px;height:38px;line-height:38px;white-space:pre;font-family:'DejaVu Sans','Liberation Sans','Noto Sans CJK SC',sans-serif;font-size:27px;font-weight:normal;font-style:normal;color:#dfe1e5;transform:scaleX(0.9706);transform-origin:0 50%;-webkit-text-stroke:.55px;">sign</div><div style="position:absolute;left:1188.8px;top:699.6px;height:38px;line-height:38px;white-space:pre;font-family:'DejaVu Sans','Liberation Sans','Noto Sans CJK SC',sans-serif;font-size:27px;font-weight:normal;font-style:normal;color:#dfe1e5;transform:scaleX(0.9539);transform-origin:0 50%;-webkit-text-stroke:.55px;">709a7a610cf55376352240413d</div><div style="position:absolute;left:500px;top:739px;width:1932px;height:39px;background:#2b2d30;"></div><div style="position:absolute;left:560px;top:739px;width:623px;height:40px;background:#2e436e;border:2px solid #6db3f2;box-sizing:border-box"></div><div style="position:absolute;left:1185px;top:739px;width:622px;height:40px;background:#2e436e;"></div><div style="position:absolute;left:1809px;top:739px;width:621px;height:40px;background:#2e436e;"></div><div style="position:absolute;left:500px;top:778px;width:1932px;height:2px;background:#1e1f22;"></div><div style="position:absolute;left:558px;top:740px;width:2px;height:38px;background:#1e1f22;"></div><div style="position:absolute;left:1183px;top:740px;width:2px;height:38px;background:#1e1f22;"></div><div style="position:absolute;left:1807px;top:740px;width:2px;height:38px;background:#1e1f22;"></div><div style="position:absolute;left:508px;top:742px;width:32px;height:32px;background:#3574f0;border-radius:6px"></div><svg style="position:absolute;left:508px;top:742px;" width="32" height="32" viewBox="0 0 32 32" fill="none"><path d="M7 16.5 L13.5 22.5 L25 9.5" stroke="#fff" stroke-width="3.6" stroke-linecap="round" stroke-linejoin="round"/></svg><div style="position:absolute;left:568.2px;top:739.6px;height:38px;line-height:38px;white-space:pre;font-family:'DejaVu Sans','Liberation Sans','Noto Sans CJK SC',sans-serif;font-size:27px;font-weight:normal;font-style:normal;color:#dfe1e5;transform:scaleX(0.9540);transform-origin:0 50%;-webkit-text-stroke:.55px;">token</div><div style="position:absolute;left:1189.8px;top:739.6px;height:38px;line-height:38px;white-space:pre;font-family:'DejaVu Sans','Liberation Sans','Noto Sans CJK SC',sans-serif;font-size:27px;font-weight:normal;font-style:normal;color:#dfe1e5;transform:scaleX(0.9529);transform-origin:0 50%;-webkit-text-stroke:.55px;">ck20240411152943</div><div style="position:absolute;left:2430px;top:540px;width:2px;height:240px;background:#1e1f22;"></div><div style="position:absolute;left:500px;top:480px;width:186px;height:60px;background:#1e1f22;border:2px solid #3b3d42;box-sizing:border-box"></div><svg style="position:absolute;left:515px;top:493px;" width="32" height="32" viewBox="0 0 32 32" fill="none"><circle cx="14.8" cy="15.1" r="9.2" stroke="#d5d7dc" stroke-width="2"/><path d="M21.5 21.8 L28.4 28.4" stroke="#d5d7dc" stroke-width="2" stroke-linecap="round"/></svg><div style="position:absolute;left:570.2px;top:491.8px;height:38px;line-height:38px;white-space:pre;font-family:'DejaVu Sans','Liberation Sans','Noto Sans CJK SC',sans-serif;font-size:27px;font-weight:normal;font-style:normal;color:#dfe1e5;transform:scaleX(0.9512);transform-origin:0 50%;-webkit-text-stroke:.55px;">token</div><svg style="position:absolute;left:505px;top:443px;" width="40" height="40" viewBox="-20 -20 40 40" fill="none"><g stroke="#d5d7dc" stroke-width="2.4" stroke-linecap="round" stroke-linejoin="round" fill="none" ><path d="M-12 0 H12 M0 -12 V12"/></g></svg><svg style="position:absolute;left:557px;top:443px;" width="40" height="40" viewBox="-20 -20 40 40" fill="none"><g stroke="#d5d7dc" stroke-width="2.4" stroke-linecap="round" stroke-linejoin="round" fill="none" ><path d="M-12 0 H12"/></g></svg><svg style="position:absolute;left:610px;top:443.6px;" width="40" height="40" viewBox="-20 -20 40 40" fill="none"><g stroke="#21d789" stroke-width="3" stroke-linecap="round" stroke-linejoin="round" fill="none" ><path d="M-8.6 -8 H8.6 M-8.6 0 H8.6 M-8.6 8 H0.6"/></g></svg><svg style="position:absolute;left:662px;top:444px;" width="40" height="40" viewBox="-20 -20 40 40" fill="none"><g stroke="#d5d7dc" stroke-width="2.4" stroke-linecap="round" stroke-linejoin="round" fill="none" ><path d="M-8 8.4 A5.7 5.7 0 0 1 -9.4 -2.8 A8.4 8.4 0 0 1 6.8 -4.4 A6.5 6.5 0 0 1 7.4 8.4 Z"/></g></svg><svg style="position:absolute;left:714px;top:443.6px;" width="40" height="40" viewBox="-20 -20 40 40" fill="none"><g stroke="#d5d7dc" stroke-width="2.3" stroke-linecap="round" stroke-linejoin="round" fill="none" ><path d="M-4.6 -11.4 L-11.8 -4.6 L-4.6 2.2 M-11 -4.6 H5 A8.2 8.2 0 0 1 5 11.6 H-5.6"/></g></svg><svg style="position:absolute;left:766px;top:444px;" width="40" height="40" viewBox="-20 -20 40 40" fill="none"><g stroke="#21d789" stroke-width="2.2" stroke-linecap="round" stroke-linejoin="round" fill="none" ><path d="M4.1 -12.6 A13.2 13.2 0 0 0 -11 7.2 M-5.2 12.1 A13.2 13.2 0 0 0 12.9 -3.4"/></g><g fill="#21d789"><path d="M6.8 -7 C2.6 -5.6 -3.6 0.2 -6.8 4.2 L-12.4 12 L-4.4 6.6 C-0.4 3.4 5.6 -2.6 7.4 -6.2 Z"/><circle cx="8.8" cy="-8.8" r="3.4"/></g><path d="M7.8 -9 H9.8" stroke="#2b2d30" stroke-width="0.8"/></svg><div style="position:absolute;left:502.0px;top:1453.0px;height:34px;line-height:34px;white-space:pre;font-family:'DejaVu Sans','Liberation Sans','Noto Sans CJK SC',sans-serif;font-size:24px;font-weight:normal;font-style:normal;color:#6f737a;transform:scaleX(0.9897);transform-origin:0 50%;"><span style="letter-spacing:.45px">1.Tab </span>值取自项目域名配置之环境<span style="letter-spacing:.45px">,</span>可以用<i style="font-style:normal;font-family:'Liberation Sans'"><span style="letter-spacing:.45px">{{</span></i><span style="letter-spacing:.45px">key</span><i style="font-style:normal;font-family:'Liberation Sans'"><span style="letter-spacing:.45px">}}</span></i>变量替换<span style="letter-spacing:.45px">API</span>参数中的魔法值<span style="letter-spacing:.45px">.</span></div><div style="position:absolute;left:503.0px;top:1483.0px;height:34px;line-height:34px;white-space:pre;font-family:'DejaVu Sans','Liberation Sans','Noto Sans CJK SC',sans-serif;font-size:24px;font-weight:normal;font-style:normal;color:#6f737a;transform:scaleX(0.9701);transform-origin:0 50%;"><span style="letter-spacing:.45px">2.Initial value </span>可以再提交插件配置文件后共享</div><div style="position:absolute;left:503.0px;top:1513.0px;height:34px;line-height:34px;white-space:pre;font-family:'DejaVu Sans','Liberation Sans','Noto Sans CJK SC',sans-serif;font-size:24px;font-weight:normal;font-style:normal;color:#6f737a;transform:scaleX(0.9532);transform-origin:0 50%;"><span style="letter-spacing:.45px">3.Current value </span>仅本地使用</div><div style="position:absolute;left:503.0px;top:1543.0px;height:34px;line-height:34px;white-space:pre;font-family:'DejaVu Sans','Liberation Sans','Noto Sans CJK SC',sans-serif;font-size:24px;font-weight:normal;font-style:normal;color:#6f737a;transform:scaleX(0.9659);transform-origin:0 50%;"><span style="letter-spacing:.45px">4.</span><b style="color:#24b88a">保留所有值</b><span style="letter-spacing:.45px">:</span>将用变量的<span style="letter-spacing:.45px"> Current Value </span>替换所有<span style="letter-spacing:.45px">Initial Value</span></div><div style="position:absolute;left:503.0px;top:1573.0px;height:34px;line-height:34px;white-space:pre;font-family:'DejaVu Sans','Liberation Sans','Noto Sans CJK SC',sans-serif;font-size:24px;font-weight:normal;font-style:normal;color:#6f737a;transform:scaleX(0.9662);transform-origin:0 50%;"><span style="letter-spacing:.45px">5.</span><b style="color:#a876e6">重置所有值</b><span style="letter-spacing:.45px">:</span>将用变量的<span style="letter-spacing:.45px"> Initial Value </span>替换所有<span style="letter-spacing:.45px"> Current Value</span></div><div style="position:absolute;left:503.0px;top:1603.0px;height:34px;line-height:34px;white-space:pre;font-family:'DejaVu Sans','Liberation Sans','Noto Sans CJK SC',sans-serif;font-size:24px;font-weight:normal;font-style:normal;color:#6f737a;transform:scaleX(0.9014);transform-origin:0 50%;"><span style="letter-spacing:.45px">6.</span><span style="color:#589df6"><span style="letter-spacing:.45px">[Help]</span></span></div><div style="position:absolute;left:2148px;top:1716px;width:144px;height:56px;background:#2b2d30;border:2px solid #4e5157;border-radius:9px;box-sizing:border-box"></div><div style="position:absolute;left:2177.0px;top:1726.8px;height:36px;line-height:36px;white-space:pre;font-family:'DejaVu Sans','Liberation Sans','Noto Sans CJK SC',sans-serif;font-size:26px;font-weight:normal;font-style:normal;color:#dfe1e5;transform:scaleX(0.9658);transform-origin:0 50%;-webkit-text-stroke:.55px;">Cancel</div><div style="position:absolute;left:2316px;top:1716px;width:144px;height:56px;background:#3574f0;border-radius:9px"></div><div style="position:absolute;left:2369px;top:1726.8px;height:36px;line-height:36px;white-space:pre;font-family:'DejaVu Sans','Liberation Sans','Noto Sans CJK SC',sans-serif;font-size:26px;font-weight:normal;font-style:normal;color:#fff;transform:scaleX(0.9866);transform-origin:0 50%;-webkit-text-stroke:.55px;">OK</div><svg style="position:absolute;left:1409.4px;top:100px;" width="34" height="56" viewBox="0 0 34 56" fill="none"><path d="M13.4 0 H20.6 V27.2 H30.8 L17 54.6 L3.2 27.2 H13.4 Z" fill="#ff9422"/></svg><div style="position:absolute;left:1404.0px;top:60.5px;width:46.8px;height:46.8px;background:#ff9422;border-radius:50%"></div><div style="position:absolute;left:1420.8px;top:59.5px;height:40px;line-height:40px;white-space:pre;font-family:'Noto Sans CJK SC',sans-serif;font-size:28.6px;font-weight:400;font-style:normal;color:#fff;transform:scaleX(0.6831);transform-origin:0 50%;-webkit-text-stroke:0.9px;">1</div><div style="position:absolute;left:1892.7px;top:243.7px;width:46.8px;height:46.8px;background:#ff9422;border-radius:50%"></div><div style="position:absolute;left:1907.2px;top:244.1px;height:40px;line-height:40px;white-space:pre;font-family:'Noto Sans CJK SC',sans-serif;font-size:28.6px;font-weight:400;font-style:normal;color:#fff;transform:scaleX(1.1519);transform-origin:0 50%;-webkit-text-stroke:0.9px;">2</div><div style="position:absolute;left:788.0px;top:615.5px;width:46.8px;height:46.8px;background:#ff9422;border-radius:50%"></div><div style="position:absolute;left:803.6px;top:616.1px;height:40px;line-height:40px;white-space:pre;font-family:'Noto Sans CJK SC',sans-serif;font-size:28.6px;font-weight:400;font-style:normal;color:#fff;transform:scaleX(1.0363);transform-origin:0 50%;-webkit-text-stroke:0.9px;">3</div></div></body></html>
